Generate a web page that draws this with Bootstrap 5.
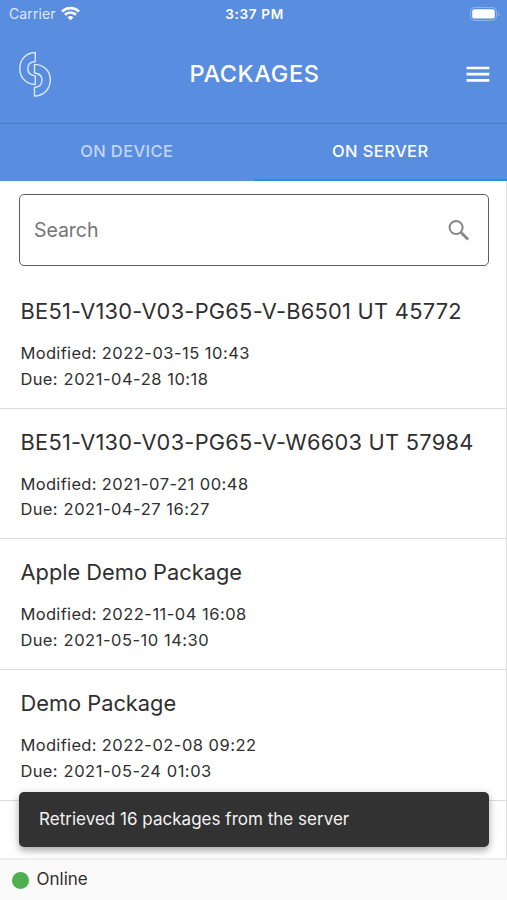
<!DOCTYPE html>
<html lang="en">
<head>
<meta charset="utf-8">
<meta name="viewport" content="width=device-width, initial-scale=1">
<title>Packages</title>
<link href="https://cdn.jsdelivr.net/npm/bootstrap@5.3.0/dist/css/bootstrap.min.css" rel="stylesheet">
<style>
  body { font-family: Inter, "Liberation Sans", sans-serif; color: #2f2f2f; background: #fff; }
  .app-screen { height: 900px; }
  .blue-area { background: #588ddf; color: #fff; }
  .status-bar { height: 28px; font-size: 14px; line-height: 28px; padding: 0 7px 0 9px; }
  .carrier { color: #dfe9fa; letter-spacing: .1px; width: 130px; }
  .clock { font-weight: 600; font-size: 13.6px; letter-spacing: .65px; }
  .status-end { width: 130px; }
  .app-header { height: 96px; padding: 0 17px 3px 19px; border-bottom: 1px solid #4b7dc7; }
  .app-title { font-size: 23.5px; font-weight: 500; line-height: 1; letter-spacing: .6px; padding-bottom: 1px; }
  .header-side { width: 60px; }
  .tab-strip { height: 57px; }
  .tab-strip .nav-link { color: #c3d6f5; font-size: 16.5px; font-weight: 500; letter-spacing: .4px; line-height: 54px; padding: 0; border-bottom: 2px solid transparent; border-radius: 0; height: 57px; }
  .tab-strip .nav-link.active { color: #fff; border-bottom-color: #2190ec; }
  .content-area { border-right: 1px solid #dedede; }
  .search-box { margin: 13px 17px 0 19px; height: 72px; border: 1.5px solid #5e5e5e; border-radius: 5px; padding: 0 17px 0 14px; }
  .search-box .form-control { font-size: 19.5px; letter-spacing: -.05px; color: #333; position: relative; top: 1px; }
  .search-box .form-control::placeholder { color: #757575; opacity: 1; }
  .package { height: 130.7px; padding: 20px 0 0 20.5px; border: 0; border-bottom: 1px solid #dcdcdc; background: transparent; color: inherit; }
  .list-group-flush > .package:last-child { border-bottom-width: 1px; }
  .package-name { font-size: 21.8px; line-height: 26px; letter-spacing: 0; margin-bottom: 17px; font-weight: 400; white-space: nowrap; }
  .package-code { letter-spacing: .26px; }
  .package-info { font-size: 16.5px; line-height: 25.7px; letter-spacing: .32px; }
  .info-date { letter-spacing: .48px; }
  .info-due { margin-left: .8px; letter-spacing: .52px; }
  .snack { position: absolute; left: 19px; right: 18px; top: 791.5px; height: 55px; border-radius: 5px; background: #323232; color: #f2f2f2; padding: 1px 20px 0; font-size: 17px; letter-spacing: .02px; box-shadow: 0 4px 6px rgba(0,0,0,.25), 0 1px 12px rgba(0,0,0,.12); }
  .footer-bar { height: 42px; background: #fafafa; border-top: 2px solid #ececec; padding: 0 12px; font-size: 17px; }
  .online-dot { width: 17px; height: 17px; background: #4caf50; margin-right: 7.5px; }
</style>
</head>
<body>
<div class="app-screen position-relative d-flex flex-column overflow-hidden">
  <header class="blue-area flex-shrink-0">
    <div class="status-bar d-flex justify-content-between align-items-center">
      <div class="carrier d-flex align-items-center"><span>Carrier</span>
        <svg class="ms-1" width="21" height="16" viewBox="0 0 21 16" fill="none" stroke="#fff" stroke-width="2.7"><path d="M2 5.600a12 12 0 0 1 17 0M5 8.800a7.700 7.700 0 0 1 11 0"/><path d="M10.500 14.300 7.500 11.400a4.300 4.300 0 0 1 6 0z" fill="#fff" stroke="none"/></svg>
      </div>
      <div class="clock">3:37 PM</div>
      <div class="status-end d-flex justify-content-end">
        <svg width="30" height="15" viewBox="0 0 30 15"><rect x=".5" y=".5" width="26" height="13" rx="3.8" fill="none" stroke="#8fb3ea"/><rect x="2.200" y="2.200" width="22.600" height="9.400" rx="2.200" fill="#fff"/><path d="M28 5a2.200 2.200 0 0 1 0 4z" fill="#8fb3ea"/></svg>
      </div>
    </div>
    <div class="app-header d-flex justify-content-between align-items-center">
      <div class="header-side">
        <svg width="34" height="46" viewBox="0 0 34 46" fill="none" stroke="#dce8fb" stroke-width="1.4" stroke-linejoin="round"><path d="M16.300 1.500C7 1.800.8 8.500.8 17.500C.8 26.500 7 33 16.300 33.500V25C11.500 24.500 8.800 21.500 8.800 17.500S11.500 10.900 16.300 10.500Z"/><path d="M15.500 13.400C25 13.700 31.300 20.300 31.300 29S25 44.700 15.500 45V36.500C20.200 36 23 33 23 29S20.200 22.500 15.500 22Z"/></svg>
      </div>
      <h1 class="app-title mb-0">PACKAGES</h1>
      <div class="header-side d-flex justify-content-end">
        <svg width="24" height="17" viewBox="0 0 24 17"><path d="M.5 2h22.800M.5 8.200h22.800M.5 14.400h22.800" stroke="#fff" stroke-width="2.700"/></svg>
      </div>
    </div>
    <nav class="tab-strip nav nav-justified flex-nowrap">
      <a class="nav-link w-50" href="#">ON DEVICE</a>
      <a class="nav-link w-50 active" href="#">ON SERVER</a>
    </nav>
  </header>
  <main class="content-area flex-grow-1 overflow-hidden">
    <div class="search-box d-flex align-items-center">
      <input class="form-control border-0 p-0 shadow-none bg-transparent" type="text" placeholder="Search" aria-label="Search">
      <svg width="25" height="25" viewBox="0 0 25 25" fill="none" stroke="#858585"><circle cx="9.600" cy="9.300" r="6.900" stroke-width="2.100"/><path d="m14.900 14.600 7.400 7.400" stroke-width="2.800"/></svg>
    </div>
    <div class="list-group list-group-flush pt-1 mt-2">
      <div class="list-group-item package"><h2 class="package-name package-code">BE51-V130-V03-PG65-V-B6501 UT 45772</h2><div class="package-info">Modified: <span class="info-date">2022-03-15 10:43</span><br>Due: <span class="info-due">2021-04-28 10:18</span></div></div>
      <div class="list-group-item package"><h2 class="package-name package-code">BE51-V130-V03-PG65-V-W6603 UT 57984</h2><div class="package-info">Modified: <span class="info-date">2021-07-21 00:48</span><br>Due: <span class="info-due">2021-04-27 16:27</span></div></div>
      <div class="list-group-item package"><h2 class="package-name">Apple Demo Package</h2><div class="package-info">Modified: <span class="info-date">2022-11-04 16:08</span><br>Due: <span class="info-due">2021-05-10 14:30</span></div></div>
      <div class="list-group-item package"><h2 class="package-name">Demo Package</h2><div class="package-info">Modified: <span class="info-date">2022-02-08 09:22</span><br>Due: <span class="info-due">2021-05-24 01:03</span></div></div>
    </div>
  </main>
  <div class="snack d-flex align-items-center" role="status">Retrieved 16 packages from the server</div>
  <footer class="footer-bar d-flex align-items-center flex-shrink-0"><span class="online-dot rounded-circle"></span>Online</footer>
</div>
<script src="https://cdn.jsdelivr.net/npm/bootstrap@5.3.0/dist/js/bootstrap.bundle.min.js"></script>
</body>
</html>
